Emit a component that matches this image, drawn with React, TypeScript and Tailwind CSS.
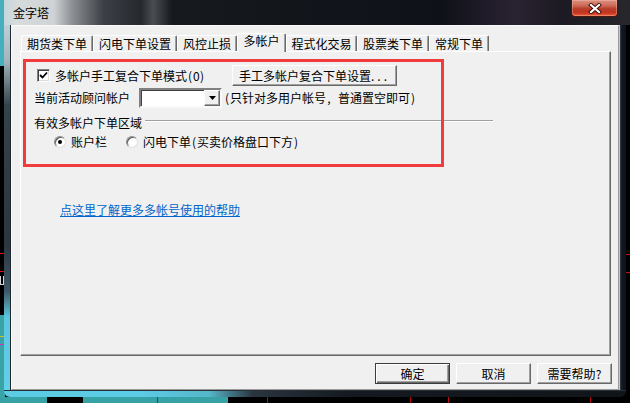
import React from "react";

const H = ({ c }: { c: string }) => (
  <span className="inline-block w-[6px] text-center">{c}</span>
);

const raised =
  "border border-t-white border-l-white border-b-[#696969] border-r-[#696969] shadow-[inset_-1px_-1px_0_#a0a0a0]";

function Btn({ children, w, def }: { children: React.ReactNode; w: string; def?: boolean }) {
  return (
    <div
      className={
        (def
          ? "border border-[#3c3c3c] shadow-[inset_1px_1px_0_#ffffff,inset_-1px_-1px_0_#696969,inset_-2px_-2px_0_#a0a0a0] "
          : raised + " ") +
        w +
        " h-[21px] bg-[#f0f0f0] flex items-center justify-center whitespace-nowrap"
      }
    >
      {children}
    </div>
  );
}

function Tab({ label, w, sel }: { label: string; w: string; sel?: boolean }) {
  return (
    <div
      className={
        w +
        " text-center whitespace-nowrap bg-[#f0f0f0] rounded-t-[2px] border-t border-l border-r border-t-white border-l-white border-r-[#696969] shadow-[inset_-1px_0_0_#a0a0a0] " +
        (sel ? "relative z-10 h-[19px] -mb-[1px] pt-0" : "h-[16px] pt-[1px]")
      }
    >
      {label}
    </div>
  );
}

function Radio({ on }: { on?: boolean }) {
  return (
    <div className="w-[12px] h-[12px] rounded-full bg-white border border-t-[#8a8a8a] border-l-[#8a8a8a] border-b-[#e0e0e0] border-r-[#e0e0e0] shadow-[inset_1px_1px_0_#5a5a5a] flex items-center justify-center">
      {on && <div className="w-[4px] h-[4px] rounded-full bg-black" />}
    </div>
  );
}

export default function App() {
  return (
    <div className="relative w-[630px] h-[403px] overflow-hidden bg-black font-['Noto_Sans_CJK_SC',sans-serif] text-[12px] leading-[14px] text-black">
      {/* desktop behind the window */}
      <div className="absolute left-0 top-0 w-[5px] h-[66px] bg-[#46aebd]" />
      <div className="absolute left-0 top-[315px] w-[5px] h-[88px] bg-[#38a4a8]" />
      <div className="absolute left-0 top-[336px] w-[5px] h-[1px] bg-[#d4c020]" />
      <div className="absolute left-0 top-[344px] w-[5px] h-[1px] bg-[#d030c0]" />
      <div className="absolute -left-[5px] top-[253px] w-[10px] h-[19px] border border-[#e01010]" />
      <div className="absolute left-0 top-[276px] w-[4px] h-[9px] border-l border-r border-b border-[#d8d8d8]" />
      <div className="absolute left-0 top-[397px] w-[47px] h-[6px] bg-[#36a2a6]" />
      <div className="absolute left-[83px] top-[397px] w-[145px] h-[6px] bg-[#36a2a6]" />
      <div className="absolute left-[157px] top-[397px] w-[1px] h-[6px] bg-[#b01010]" />
      <div className="absolute left-[267px] top-[397px] w-[1px] h-[6px] bg-[#b01010]" />
      <div className="absolute left-[410px] top-[397px] w-[1px] h-[6px] bg-[#b01010]" />
      <div className="absolute left-[448px] top-[397px] w-[1px] h-[6px] bg-[#b01010]" />
      <div className="absolute left-[590px] top-[397px] w-[1px] h-[6px] bg-[#b01010]" />
      <div className="absolute left-[626px] top-0 w-[4px] h-[25px] bg-[#26262c]" />
      <div className="absolute left-[626px] top-[254px] w-[4px] h-[1px] bg-[#c01010]" />
      <div className="absolute left-[626px] top-[272px] w-[4px] h-[1px] bg-[#c01010]" />

      {/* window */}
      <div className="absolute left-[4px] top-0 w-[622px] h-[397px] flex flex-col rounded-b-[6px] overflow-hidden">
        {/* title bar */}
        <div className="h-[25px] flex items-start bg-[linear-gradient(90deg,#c4d6dc_0%,#d6dbdc_2%,#cfd3d5_8%,#8c9094_11%,#3c4046_16%,#25282d_22%,#4a4e53_24%,#16191e_27%,#0e1117_70%,#2a2232_82%,#1c1a22_90%,#26262c_100%)]">
          <div className="pl-[9px] h-[25px] flex items-center">金字塔</div>
          <div className="ml-auto mr-[8px] w-[47px] h-[17px] rounded-b-[4px] border border-t-0 border-[#4a1810] bg-[linear-gradient(180deg,#dc9282_0%,#cd6a58_35%,#b63c2a_55%,#c6351f_80%,#e8603c_100%)] shadow-[inset_0_0_0_1px_rgba(255,200,190,0.35)] flex items-center justify-center">
            <svg width="14" height="11" viewBox="0 0 14 11">
              <path d="M3 2 L11 9 M11 2 L3 9" stroke="#3a0c06" strokeWidth="4" strokeLinecap="square" />
              <path d="M3 2 L11 9 M11 2 L3 9" stroke="#ffffff" strokeWidth="2.2" strokeLinecap="square" />
            </svg>
          </div>
        </div>

        {/* body */}
        <div className="flex h-[365px]">
          <div className="w-[7px] border-r border-r-[#1d252d] bg-[linear-gradient(180deg,#bcd0d8_0%,#9fb4bc_10%,#34424c_22%,#2a3640_60%,#3f5868_73%,#5cc6de_80%,#62d0e8_100%)]" />
          <div className="w-[608px] bg-[#f0f0f0] border border-t-[#fafafa] border-l-[#fafafa] border-r-[#9a9a9a] border-b-[#9a9a9a] flex flex-col">
            {/* tabs */}
            <div className="mt-[7px] ml-[9px] h-[18px] flex items-end">
              <Tab label="期货类下单" w="w-[72px]" />
              <Tab label="闪电下单设置" w="w-[84px]" />
              <Tab label="风控止损" w="w-[60px]" />
              <Tab label="多帐户" w="w-[49px]" sel />
              <Tab label="程式化交易" w="w-[71px]" />
              <Tab label="股票类下单" w="w-[72px]" />
              <Tab label="常规下单" w="w-[60px]" />
            </div>
            {/* panel */}
            <div className="relative ml-[8px] mr-[7px] h-[305px] border border-t-white border-l-white border-b-[#696969] border-r-[#696969] shadow-[inset_-1px_-1px_0_#a0a0a0] flex flex-col">
              {/* row 1 */}
              <div className="mt-[13px] h-[21px] pl-[16px] flex items-center">
                <div className="w-[13px] h-[13px] bg-white border border-t-[#808080] border-l-[#808080] border-b-white border-r-white shadow-[inset_1px_1px_0_#404040,inset_-1px_-1px_0_#dcdcdc] flex items-center justify-center">
                  <svg width="9" height="9" viewBox="0 0 9 9">
                    <path d="M1 4 L3.5 6.5 L8 1.5" fill="none" stroke="#000" strokeWidth="1.8" />
                  </svg>
                </div>
                <div className="ml-[5px] w-[177px] whitespace-nowrap">
                  多帐户手工复合下单模式<H c="(" />
                  <H c="0" />
                  <H c=")" />
                </div>
                <Btn w="w-[165px]">
                  手工多帐户复合下单设置<span className="tracking-[3px]">...</span>
                </Btn>
              </div>
              {/* row 2 */}
              <div className="mt-[2px] h-[20px] pl-[13px] flex items-center">
                <div className="w-[96px] mr-[9px] whitespace-nowrap">当前活动顾问帐户</div>
                <div className="w-[83px] h-[20px] bg-white border-2 border-t-[#808080] border-l-[#808080] border-b-[#f8f8f8] border-r-[#f8f8f8] shadow-[inset_1px_1px_0_#404040] flex justify-end">
                  <div className={raised + " w-[16px] h-[16px] bg-[#f0f0f0] flex items-center justify-center"}>
                    <svg width="7" height="4" viewBox="0 0 7 4">
                      <path d="M0 0 H7 L3.5 4 Z" fill="#000" />
                    </svg>
                  </div>
                </div>
                <div className="ml-[2px] whitespace-nowrap">
                  <H c="(" />只针对多用户帐号<H c="," />
                  <H c=" " />普通置空即可<H c=")" />
                </div>
              </div>
              {/* group header */}
              <div className="mt-[8px] h-[14px] pl-[13px] flex items-start">
                <div className="w-[108px] whitespace-nowrap">有效多帐户下单区域</div>
                <div className="ml-[3px] mt-[4px] w-[348px] h-[2px] border-t border-t-[#a0a0a0] border-b border-b-white" />
              </div>
              {/* radios */}
              <div className="mt-[4px] h-[15px] pl-[33px] flex items-center">
                <Radio on />
                <div className="ml-[5px] w-[36px] whitespace-nowrap">账户栏</div>
                <div className="ml-[19px]">
                  <Radio />
                </div>
                <div className="ml-[5px] whitespace-nowrap">
                  闪电下单<H c="(" />买卖价格盘口下方<H c=")" />
                </div>
              </div>
              {/* link */}
              <div className="mt-[54px] pl-[39px] h-[14px]">
                <span className="text-[#0066cc] underline underline-offset-[1px] whitespace-nowrap">
                  点这里了解更多多帐号使用的帮助
                </span>
              </div>
              {/* red annotation box */}
              <div className="absolute left-[2px] top-[7px] w-[421px] h-[108px] border-[3px] border-[#f03c3c] pointer-events-none" />
            </div>
            {/* bottom buttons */}
            <div className="mt-[7px] pr-[6px] flex justify-end gap-[6px]">
              <Btn w="w-[75px]" def>
                确定
              </Btn>
              <Btn w="w-[75px]">取消</Btn>
              <Btn w="w-[75px]">
                需要帮助<H c="?" />
              </Btn>
            </div>
          </div>
          <div className="w-[7px] border-l border-l-[#c8c8c8] bg-[linear-gradient(90deg,#3a3e44_0%,#101822_30%,#0c121a_100%)]" />
        </div>

        {/* bottom frame */}
        <div className="h-[7px] border-t border-t-[#2a3036] bg-[linear-gradient(90deg,#5ccbe4_0%,#5ccbe4_22%,#56b6ca_33%,#2a3540_40%,#141a20_55%,#10151a_100%)]" />
      </div>
    </div>
  );
}
